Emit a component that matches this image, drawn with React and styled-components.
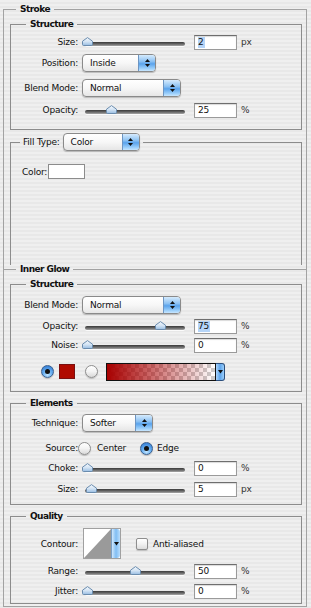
import React from 'react';
import styled, { createGlobalStyle, css } from 'styled-components';

const GlobalStyle = createGlobalStyle`
  html, body { margin: 0; padding: 0; }
  body {
    width: 311px;
    height: 608px;
    overflow: hidden;
    background: repeating-linear-gradient(to bottom, #efefef 0px, #efefef 2px, #e8e8e8 2px, #e8e8e8 4px);
    font-family: "DejaVu Sans", "Noto Sans", sans-serif;
    font-size: 9px;
    letter-spacing: -0.2px;
    color: #111;
  }
`;

const Page = styled.div`
  padding: 3px 4px 0 3px;
`;

const Frame = styled.fieldset`
  margin: ${(p) => p.$mt || 0}px 0 0 0;
  padding: ${(p) => p.$pad || '0'};
  border: 1px solid ${(p) => (p.$outer ? '#a2a2a2' : '#8c8c8c')};
  ${(p) => p.$open && 'border-bottom: none;'}
  min-width: 0;
`;

const Legend = styled.legend`
  margin-left: ${(p) => p.$ml}px;
  padding: 0 ${(p) => (p.$px != null ? p.$px : 4)}px;
  font-weight: ${(p) => (p.$plain ? 'normal' : 'bold')};
  letter-spacing: ${(p) => (p.$plain ? '-0.2px' : '-0.55px')};
  line-height: 12px;
  display: flex;
  align-items: center;
`;

const Body = styled.div`
  display: flow-root;
  padding-bottom: ${(p) => p.$pb || 0}px;
  min-height: ${(p) => p.$minH || 0}px;
  box-sizing: border-box;
`;

const Row = styled.div`
  display: flex;
  align-items: center;
  height: ${(p) => p.$h}px;
  margin-top: ${(p) => p.$mt}px;
  padding-left: ${(p) => p.$pl || 0}px;
`;

const Label = styled.div`
  width: 67px;
  flex-shrink: 0;
  text-align: right;
  white-space: nowrap;
`;

const Text = styled.span`
  white-space: nowrap;
  margin-left: ${(p) => p.$ml || 0}px;
`;

/* ---------- slider ---------- */
const SliderBox = styled.div`
  position: relative;
  width: 106px;
  height: 16px;
  margin-left: 4px;
  flex-shrink: 0;
  display: flex;
  align-items: flex-end;
  padding: 0 3px 4px 3px;
  box-sizing: border-box;
`;

const Track = styled.div`
  flex: 1;
  height: 4px;
  border-radius: 2px;
  background: linear-gradient(#3a3a3a, #666 50%, #a8a8a8);
  box-shadow: 0 1px 0 rgba(255, 255, 255, 0.8);
`;

const ThumbWrap = styled.div`
  position: absolute;
  top: 3px;
  width: 11px;
  height: 9px;
  line-height: 0;
`;

const Slider = ({ v }) => (
  <SliderBox>
    <Track />
    <ThumbWrap style={{ left: `${Math.round(v * 96)}px` }}>
      <svg width="11" height="9" viewBox="0 0 11 9">
        <defs>
          <linearGradient id="thumbg" x1="0" y1="0" x2="0" y2="1">
            <stop offset="0" stopColor="#f4f8fc" />
            <stop offset="0.5" stopColor="#d4e4f4" />
            <stop offset="1" stopColor="#98bde2" />
          </linearGradient>
        </defs>
        <path
          d="M0.5 4.2 L5.5 0.6 L10.5 4.2 V7.4 Q10.5 8.5 9.4 8.5 H1.6 Q0.5 8.5 0.5 7.4 Z"
          fill="url(#thumbg)"
          stroke="#6a8cae"
          strokeWidth="1"
        />
      </svg>
    </ThumbWrap>
  </SliderBox>
);

/* ---------- number field ---------- */
const Field = styled.div`
  width: 43px;
  height: 15px;
  box-sizing: border-box;
  margin-left: 6px;
  background: #fff;
  border: 1px solid #9a9a9a;
  border-top-color: #6e6e6e;
  box-shadow: inset 0 1px 1px rgba(0, 0, 0, 0.15);
  display: flex;
  align-items: center;
  padding-left: 3px;
  flex-shrink: 0;
`;

const Sel = styled.span`
  background: #b5d4f7;
  line-height: 11px;
  padding-right: 1px;
`;

const Unit = styled.span`
  margin-left: 4px;
  color: #333;
`;

/* ---------- popup ---------- */
const PopupBox = styled.div`
  width: ${(p) => p.$w}px;
  height: 18px;
  box-sizing: border-box;
  margin-left: ${(p) => (p.$ml != null ? p.$ml : 4)}px;
  display: flex;
  border: 1px solid #8a8a8a;
  border-radius: 4px;
  background: linear-gradient(#ffffff, #f7f7f7 50%, #e6e6e6);
  box-shadow: 0 1px 1px rgba(0, 0, 0, 0.22);
  overflow: hidden;
  flex-shrink: 0;
  font-weight: normal;
  letter-spacing: -0.2px;
`;

const PopupText = styled.div`
  flex: 1;
  padding-left: 7px;
  display: flex;
  align-items: center;
`;

const Stepper = styled.div`
  width: 16px;
  border-left: 1px solid #6d95c2;
  background: linear-gradient(#d6ebfd 0%, #8dc2f3 40%, #5aa3ec 55%, #9dd0fb 85%, #c8e6fe 100%);
  display: flex;
  align-items: center;
  justify-content: center;
`;

const Popup = ({ w, ml, children }) => (
  <PopupBox $w={w} $ml={ml}>
    <PopupText>{children}</PopupText>
    <Stepper>
      <svg width="7" height="10" viewBox="0 0 7 10">
        <path d="M1 4 L3.5 1 L6 4 Z" fill="#111" />
        <path d="M1 6 L3.5 9 L6 6 Z" fill="#111" />
      </svg>
    </Stepper>
  </PopupBox>
);

/* ---------- radio / checkbox ---------- */
const Radio = styled.span`
  width: 13px;
  height: 13px;
  border-radius: 50%;
  box-sizing: border-box;
  flex-shrink: 0;
  margin-left: ${(p) => p.$ml || 0}px;
  display: flex;
  align-items: center;
  justify-content: center;
  box-shadow: 0 1px 1px rgba(0, 0, 0, 0.2);
  ${(p) =>
    p.$on
      ? css`
          background: radial-gradient(circle at 50% 80%, #c4e6ff 0%, #6cb2f2 40%, #2f79d2 90%);
          border: 1px solid #3a5f8e;
        `
      : css`
          background: linear-gradient(#ffffff, #f3f3f3 50%, #d9d9d9);
          border: 1px solid #8e8e8e;
        `}
  &::after {
    content: '';
    width: 5px;
    height: 5px;
    border-radius: 50%;
    background: #111;
    display: ${(p) => (p.$on ? 'block' : 'none')};
  }
`;

const Check = styled.span`
  width: 12px;
  height: 12px;
  box-sizing: border-box;
  margin-left: 15px;
  border: 1px solid #8e8e8e;
  border-radius: 2px;
  background: linear-gradient(#ffffff, #f2f2f2 50%, #dcdcdc);
  box-shadow: 0 1px 1px rgba(0, 0, 0, 0.18);
  flex-shrink: 0;
`;

/* ---------- swatches ---------- */
const Swatch = styled.span`
  width: ${(p) => p.$w}px;
  height: ${(p) => p.$h}px;
  box-sizing: border-box;
  margin-left: ${(p) => p.$ml || 0}px;
  background: ${(p) => p.$c};
  border: 1px solid ${(p) => p.$b};
  flex-shrink: 0;
`;

const GradWrap = styled.div`
  display: flex;
  margin-left: 8px;
  height: 18px;
`;

const GradBar = styled.div`
  width: 110px;
  height: 18px;
  box-sizing: border-box;
  border: 1px solid #111;
  background:
    linear-gradient(to right, #a80000 0%, rgba(168, 0, 0, 0.55) 45%, rgba(168, 0, 0, 0) 100%),
    repeating-conic-gradient(#cdcdcd 0 25%, #ffffff 0 50%) 0 0 / 8px 8px;
`;

const DropArrow = styled.div`
  width: 9px;
  box-sizing: border-box;
  border: 1px solid #2b4f7d;
  border-left: none;
  border-radius: 0 3px 3px 0;
  background: linear-gradient(to right, #a9d3fb, #5ea5ec 50%, #9ccffb);
  display: flex;
  align-items: center;
  justify-content: center;
`;

const DownTri = () => (
  <svg width="5" height="5" viewBox="0 0 5 5">
    <path d="M0 1 L5 1 L2.5 4.5 Z" fill="#111" />
  </svg>
);

const ContourBox = styled.div`
  display: flex;
  width: 38px;
  height: 31px;
  box-sizing: border-box;
  margin-left: 5px;
  border: 1px solid #a0a0a0;
  background: #fff;
  flex-shrink: 0;
`;

const ContourArrow = styled.div`
  width: 8px;
  border-left: 1px solid #7a9fc6;
  border-radius: 0 3px 3px 0;
  background: linear-gradient(to right, #cfe7fd, #80bdf3 50%, #b9ddfd);
  display: flex;
  align-items: center;
  justify-content: center;
`;

const ContourCurve = styled.svg`
  flex: 1;
  height: 100%;
`;

export default function App() {
  return (
    <>
      <GlobalStyle />
      <Page>
        {/* Stroke */}
        <Frame $outer $open $pad="3px 4px 4px 6px">
          <Legend $ml={6}>Stroke</Legend>

          <Frame>
            <Legend $ml={15}>Structure</Legend>
            <Body $pb={11}>
              <Row $h={16} $mt={4}>
                <Label>Size:</Label>
                <Slider v={0} />
                <Field><Sel>2</Sel></Field>
                <Unit>px</Unit>
              </Row>
              <Row $h={18} $mt={4}>
                <Label>Position:</Label>
                <Popup w={74}>Inside</Popup>
              </Row>
              <Row $h={18} $mt={7}>
                <Label>Blend Mode:</Label>
                <Popup w={99}>Normal</Popup>
              </Row>
              <Row $h={16} $mt={5}>
                <Label>Opacity:</Label>
                <Slider v={0.25} />
                <Field>25</Field>
                <Unit>%</Unit>
              </Row>
            </Body>
          </Frame>

          <Frame $mt={3} $open>
            <Legend $ml={9} $px={3} $plain>
              <Text>Fill Type:</Text>
              <Popup w={77} ml={3}>Color</Popup>
            </Legend>
            <Body $minH={114}>
              <Row $h={15} $mt={13} $pl={11}>
                <Text>Color:</Text>
                <Swatch $w={37} $h={15} $c="#ffffff" $b="#8c8c8c" $ml={1} />
              </Row>
            </Body>
          </Frame>
        </Frame>

        {/* Inner Glow */}
        <Frame $outer $mt={-6} $pad="3px 4px 2px 6px">
          <Legend $ml={6}>Inner Glow</Legend>

          <Frame>
            <Legend $ml={15}>Structure</Legend>
            <Body $pb={10}>
              <Row $h={18} $mt={6}>
                <Label>Blend Mode:</Label>
                <Popup w={99}>Normal</Popup>
              </Row>
              <Row $h={16} $mt={4}>
                <Label>Opacity:</Label>
                <Slider v={0.76} />
                <Field><Sel>75</Sel></Field>
                <Unit>%</Unit>
              </Row>
              <Row $h={16} $mt={3}>
                <Label>Noise:</Label>
                <Slider v={0} />
                <Field>0</Field>
                <Unit>%</Unit>
              </Row>
              <Row $h={19} $mt={9} $pl={30}>
                <Radio $on />
                <Swatch $w={16} $h={15} $c="#b00a00" $b="#7a1010" $ml={5} />
                <Radio $ml={10} />
                <GradWrap>
                  <GradBar />
                  <DropArrow>
                    <DownTri />
                  </DropArrow>
                </GradWrap>
              </Row>
            </Body>
          </Frame>

          <Frame $mt={5}>
            <Legend $ml={15}>Elements</Legend>
            <Body $pb={7}>
              <Row $h={18} $mt={5}>
                <Label>Technique:</Label>
                <Popup w={71}>Softer</Popup>
              </Row>
              <Row $h={14} $mt={9}>
                <Label>Source:</Label>
                <Radio />
                <Text $ml={6}>Center</Text>
                <Radio $on $ml={14} />
                <Text $ml={4}>Edge</Text>
              </Row>
              <Row $h={16} $mt={5}>
                <Label>Choke:</Label>
                <Slider v={0} />
                <Field>0</Field>
                <Unit>%</Unit>
              </Row>
              <Row $h={16} $mt={5}>
                <Label>Size:</Label>
                <Slider v={0.04} />
                <Field>5</Field>
                <Unit>px</Unit>
              </Row>
            </Body>
          </Frame>

          <Frame $mt={5}>
            <Legend $ml={15}>Quality</Legend>
            <Body $pb={4}>
              <Row $h={31} $mt={6}>
                <Label>Contour:</Label>
                <ContourBox>
                  <ContourCurve viewBox="0 0 29 29" preserveAspectRatio="none">
                    <path d="M0 29 L29 0 L29 29 Z" fill="#9a9a9a" />
                  </ContourCurve>
                  <ContourArrow>
                    <DownTri />
                  </ContourArrow>
                </ContourBox>
                <Check />
                <Text $ml={5}>Anti-aliased</Text>
              </Row>
              <Row $h={16} $mt={4}>
                <Label>Range:</Label>
                <Slider v={0.5} />
                <Field>50</Field>
                <Unit>%</Unit>
              </Row>
              <Row $h={16} $mt={4}>
                <Label>Jitter:</Label>
                <Slider v={0} />
                <Field>0</Field>
                <Unit>%</Unit>
              </Row>
            </Body>
          </Frame>
        </Frame>
      </Page>
    </>
  );
}
